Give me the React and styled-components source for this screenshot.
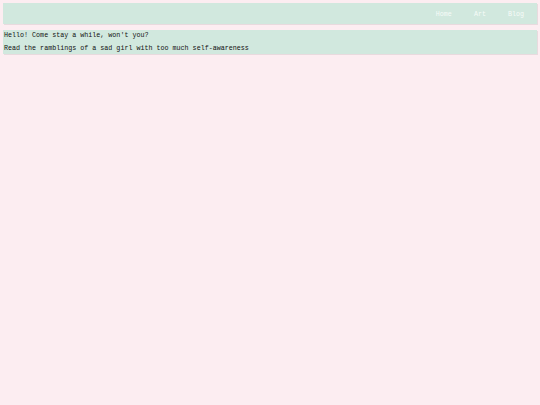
import styled, { createGlobalStyle } from "styled-components";

const GlobalStyle = createGlobalStyle`
  html, body {
    margin: 0;
    background: #fcedf1;
  }
  body {
    padding: 3px;
    font-family: "Liberation Mono", "Courier New", monospace;
    font-size: 6.7px;
    color: #111;
  }
`;

const Nav = styled.nav`
  display: flex;
  justify-content: flex-end;
  align-items: center;
  gap: 22px;
  height: 21px;
  padding: 0 13px 0 0;
  background: #d1e8de;
  box-shadow: 0.5px 0.5px 0.5px rgba(0, 0, 0, 0.08);
`;

const NavLink = styled.a`
  color: #f6fbf8;
  text-decoration: none;
  font-size: 6.7px;
`;

const Header = styled.header`
  margin-top: 6px;
  padding: 1px 1px 0;
  background: #d1e8de;
  box-shadow: 0.5px 0.5px 0.5px rgba(0, 0, 0, 0.08);
`;

const Line = styled.p`
  margin: 0;
  line-height: 9.5px;
  & + & {
    margin-top: 3.5px;
  }
`;

export default function App() {
  return (
    <>
      <GlobalStyle />
      <Nav>
        <NavLink href="#">Home</NavLink>
        <NavLink href="#">Art</NavLink>
        <NavLink href="#">Blog</NavLink>
      </Nav>
      <Header>
        <Line>Hello! Come stay a while, won't you?</Line>
        <Line>Read the ramblings of a sad girl with too much self-awareness</Line>
      </Header>
    </>
  );
}
